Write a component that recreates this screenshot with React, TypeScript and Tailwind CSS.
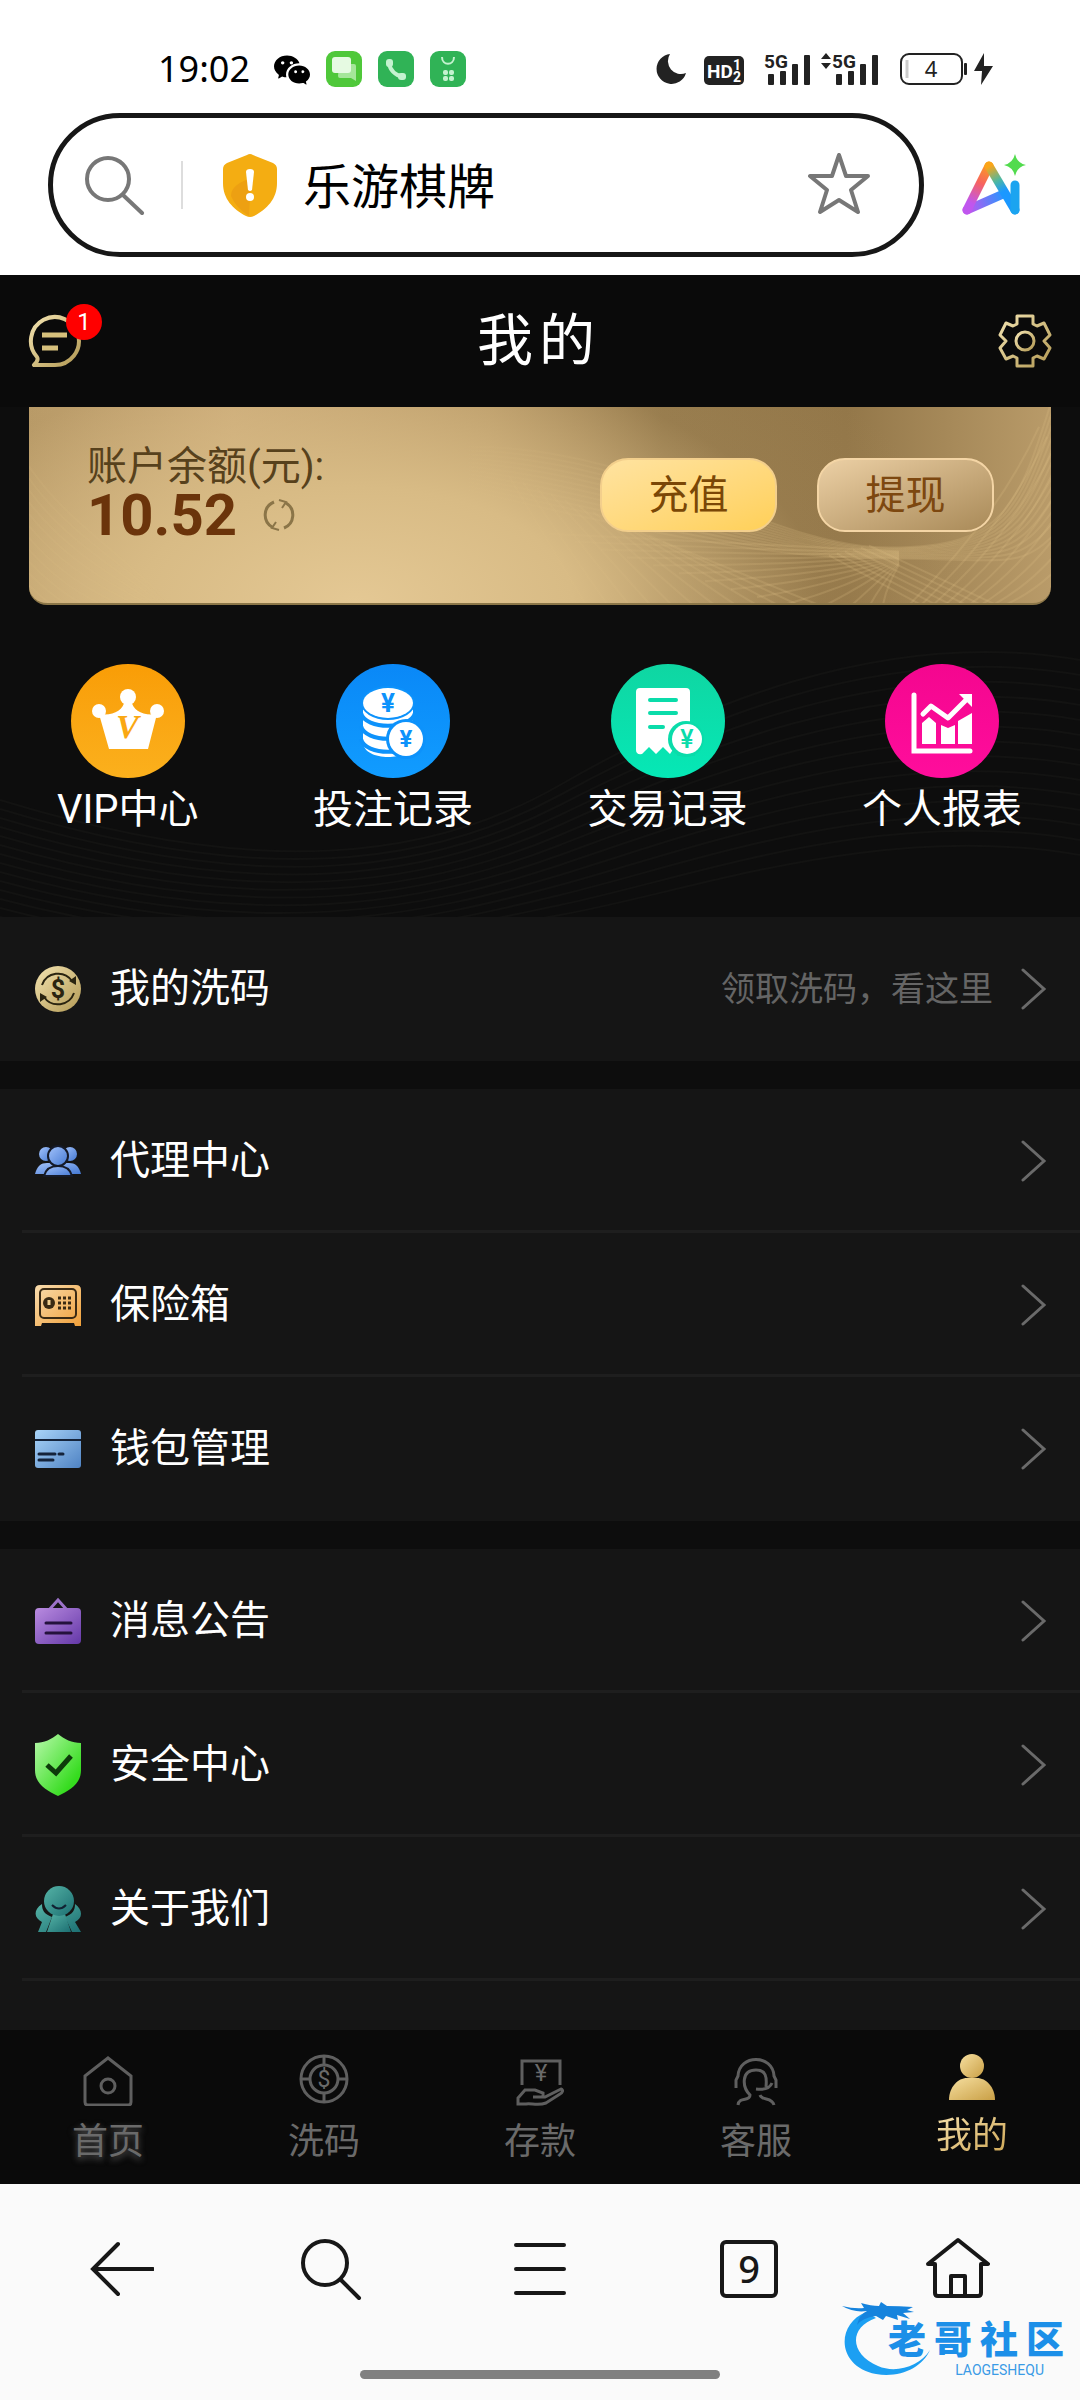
import type { ReactNode } from "react";
import { BsWechat } from "react-icons/bs";

const GOLD = "url(#gold)";

function Gradients() {
  return (
    <svg className="absolute size-0" aria-hidden="true">
      <defs>
        <linearGradient id="gold" x1="0" y1="0" x2="1" y2="1">
          <stop offset="0" stopColor="#f3e3b0" />
          <stop offset="1" stopColor="#b39a55" />
        </linearGradient>
        <linearGradient id="user" x1="0" y1="0" x2="1" y2="1">
          <stop offset="0" stopColor="#f6dfa0" />
          <stop offset="1" stopColor="#c99f45" />
        </linearGradient>
        <linearGradient id="blue" x1="0" y1="0" x2="1" y2="1">
          <stop offset="0" stopColor="#a3c3fb" />
          <stop offset="1" stopColor="#4579d3" />
        </linearGradient>
        <linearGradient id="sky" x1="0" y1="0" x2="1" y2="1">
          <stop offset="0" stopColor="#a9d4f8" />
          <stop offset="1" stopColor="#4f83c4" />
        </linearGradient>
        <linearGradient id="orange" x1="0" y1="0" x2="1" y2="1">
          <stop offset="0" stopColor="#f8dcae" />
          <stop offset="1" stopColor="#f0a03a" />
        </linearGradient>
        <linearGradient id="purple" x1="0" y1="0" x2="1" y2="1">
          <stop offset="0" stopColor="#b98be0" />
          <stop offset="1" stopColor="#6438a8" />
        </linearGradient>
        <linearGradient id="green" x1="0" y1="0" x2="1" y2="1">
          <stop offset="0.1" stopColor="#a8f59a" />
          <stop offset="0.8" stopColor="#35dc1e" />
        </linearGradient>
        <linearGradient id="teal" x1="0" y1="0" x2="1" y2="1">
          <stop offset="0" stopColor="#55b3a6" />
          <stop offset="1" stopColor="#1c6f72" />
        </linearGradient>
      </defs>
    </svg>
  );
}

function Signal({ arrows }: { arrows?: boolean }) {
  return (
    <div className="flex items-start">
      {arrows && (
        <svg className="w-3 h-8" viewBox="0 0 12 32" fill="#222">
          <path d="M6 0l5 6H1zM6 16l5-6H1z" />
        </svg>
      )}
      <svg className="w-12 h-8 overflow-visible" viewBox="0 0 48 32" fill="#222">
        <text x="0" y="15" fontSize="19" fontWeight="700" fontFamily="Roboto">5G</text>
        <rect x="4" y="21" width="6" height="11" rx="1" />
        <rect x="16" y="18" width="6" height="14" rx="1" />
        <rect x="28" y="11" width="6" height="21" rx="1" />
        <rect x="40" y="2" width="6" height="30" rx="1" />
      </svg>
    </div>
  );
}

function StatusBar() {
  return (
    <div className="flex items-center justify-between h-[113px] pl-[158px] pr-[86px] pt-6">
      <div className="flex items-center">
        <span className="text-[36px] leading-9 text-black">19:02</span>
        <BsWechat className="ml-6 size-9 text-black" />
        <div className="ml-4 flex gap-4">
          <svg className="size-9" viewBox="0 0 36 36">
            <rect width="36" height="36" rx="9" fill="#4fc83a" />
            <path d="M13 13h15a2 2 0 012 2v15l-5-3H14a2 2 0 01-2-2z" fill="#a5e69a" />
            <rect x="6" y="6" width="19" height="16" rx="3" fill="#e6fae2" />
          </svg>
          <svg className="size-9" viewBox="0 0 36 36">
            <rect width="36" height="36" rx="9" fill="#30b356" />
            <path d="M11 12c1 7 6 12 14 14" fill="none" stroke="#c4f2cf" strokeWidth="4" />
            <rect x="8" y="8" width="7" height="8" rx="3" fill="#c4f2cf" />
            <rect x="20" y="22" width="8" height="7" rx="3" fill="#c4f2cf" />
          </svg>
          <svg className="size-9" viewBox="0 0 36 36">
            <rect width="36" height="36" rx="9" fill="#30b356" />
            <path d="M12 6c0 9 12 9 12 0" fill="none" stroke="#c4f2cf" strokeWidth="2" />
            <g fill="#c4f2cf">
              <rect x="13" y="19" width="5" height="5" rx="2" />
              <rect x="19" y="19" width="5" height="5" rx="2" />
              <rect x="13" y="25" width="5" height="5" rx="2" />
              <rect x="19" y="25" width="5" height="5" rx="2" />
            </g>
          </svg>
        </div>
      </div>
      <div className="flex items-center">
        <svg className="size-8" viewBox="0 0 32 32" fill="#222">
          <path d="M14 1A15 15 0 1030 20 A13 13 0 0114 1z" />
        </svg>
        <svg className="ml-4 w-10 h-8" viewBox="0 0 40 32">
          <rect y="3" width="40" height="29" rx="5" fill="#222" />
          <g fill="#fff" fontFamily="Roboto" fontWeight="700">
            <text x="3" y="25" fontSize="19">HD</text>
            <text x="29" y="17" fontSize="14">1</text>
            <text x="29" y="29" fontSize="14">2</text>
          </g>
        </svg>
        <div className="ml-5 flex gap-2">
          <Signal />
          <Signal arrows />
        </div>
        <svg className="ml-5 w-[94px] h-8 overflow-visible" viewBox="0 0 94 32">
          <rect x="1" y="1" width="61" height="30" rx="8" fill="none" stroke="#222" strokeWidth="2" />
          <path d="M7 7v18" stroke="#ccc" strokeWidth="3" />
          <rect x="64" y="10" width="3" height="12" rx="1" fill="#222" />
          <text x="31" y="24" textAnchor="middle" fontSize="22" fontFamily="Noto Sans" fill="#222">4</text>
          <path d="M84 0L74 18h8l-1 14 12-19h-9z" fill="#222" />
        </svg>
      </div>
    </div>
  );
}

function AddressBar() {
  return (
    <div className="flex items-center pl-12 pr-13 pb-[18px]">
      <div className="flex flex-1 min-w-0 items-center h-36 rounded-full border-5 border-[#171717] pl-8 pr-12">
        <svg className="size-[60px] shrink-0" viewBox="0 0 60 60" fill="none" stroke="#777" strokeWidth="4" strokeLinecap="round">
          <circle cx="23" cy="24" r="21" />
          <path d="M38 40l19 18" />
        </svg>
        <span className="ml-9 w-0.5 h-12 bg-[#ddd]" />
        <svg className="ml-10 w-[54px] h-16 shrink-0" viewBox="0 0 54 64">
          <path d="M24 2q3-2 6 0l20 8q4 2 4 6v14c0 16-10 26-23 33q-4 2-8 0C10 56 0 46 0 30V16q0-4 4-6z" fill="#f4ad12" />
          <path d="M8 43c0-10 10-14 20-18l-2 38C18 58 12 52 8 43z" fill="#eda012" />
          <path d="M23 19q0-3 4-3t4 3l-2 18q-2 2-4 0z" fill="#fff" />
          <circle cx="27" cy="44" r="4" fill="#fff" />
        </svg>
        <input
          aria-label="地址"
          defaultValue="乐游棋牌"
          className="ml-[26px] pt-0.5 flex-1 min-w-0 text-[48px] leading-[72px] text-black outline-none"
        />
        <button type="button" aria-label="收藏" className="shrink-0">
          <svg className="size-16" viewBox="0 0 64 64" fill="none" stroke="#777" strokeWidth="4" strokeLinejoin="round">
            <path d="M32 2l7 21h22L44 37l7 22-19-12-19 12 7-22L3 23h22z" />
          </svg>
        </button>
      </div>
      <button type="button" aria-label="AI" className="ml-9 shrink-0">
        <svg className="w-[68px] h-16" viewBox="0 0 68 64" fill="none" strokeWidth="9" strokeLinecap="round" strokeLinejoin="round">
          <defs>
            <linearGradient id="ai1" gradientUnits="userSpaceOnUse" x1="30" y1="10" x2="6" y2="60">
              <stop offset="0" stopColor="#fba518" />
              <stop offset="0.4" stopColor="#f7635f" />
              <stop offset="0.8" stopColor="#c056ee" />
            </linearGradient>
            <linearGradient id="ai2" gradientUnits="userSpaceOnUse" x1="8" y1="58" x2="44" y2="46">
              <stop offset="0" stopColor="#c056ee" />
              <stop offset="1" stopColor="#2b95ff" />
            </linearGradient>
            <linearGradient id="ai3" gradientUnits="userSpaceOnUse" x1="28" y1="14" x2="48" y2="50">
              <stop offset="0" stopColor="#fba518" />
              <stop offset="0.4" stopColor="#4fb8a0" />
              <stop offset="0.7" stopColor="#1b98ff" />
            </linearGradient>
          </defs>
          <path d="M7 57l34-15" stroke="url(#ai2)" />
          <path d="M7 57L29 13" stroke="url(#ai1)" />
          <path d="M29 13l26 44" stroke="url(#ai3)" />
          <path d="M55 57V32" stroke="#1ba4f0" />
          <path d="M55 1q2 9 11 11-9 2-11 11-2-9-11-11 9-2 11-11z" fill="#52db4e" />
        </svg>
      </button>
    </div>
  );
}

function PageHeader() {
  return (
    <header className="flex items-center justify-between h-33 px-7 bg-[#0a0a0a]">
      <button type="button" aria-label="消息" className="relative">
        <svg className="size-[54px]" viewBox="0 0 54 54" fill="none" stroke={GOLD} strokeWidth="4">
          <path d="M6 51h21a24 24 0 10-18-8q2 3-3 8z" strokeLinejoin="round" />
          <path d="M14 21h25M14 34h16" strokeWidth="5" stroke="#d6c07c" />
        </svg>
        <span className="absolute -top-2.5 left-[38px] flex size-9 items-center justify-center rounded-full bg-[#f00] text-[24px] leading-none text-white">
          1
        </span>
      </button>
      <h1 className="flex gap-1.5 pr-2 text-[56px] leading-[84px] text-white">
        <span>我</span>
        <span>的</span>
      </h1>
      <button type="button" aria-label="设置">
        <svg className="size-[54px]" viewBox="0 0 54 54" fill="none" stroke={GOLD} strokeWidth="3" strokeLinejoin="round">
          <path d="M19 2h16v8l4 2 7-3 6 12-6 6 6 7-6 11-7-3-4 2v8H19v-8l-4-2-7 3-6-11 6-7-6-6 6-12 7 3 4-2z" />
          <circle cx="27" cy="27" r="9" />
        </svg>
      </button>
    </header>
  );
}

const lines = (count: number) => Array.from({ length: count }, (_, i) => i);

function CardWaves() {
  return (
    <svg className="absolute inset-0 size-full" viewBox="0 0 1022 198" preserveAspectRatio="none" fill="none" stroke="url(#wave)" strokeWidth="2">
      <defs>
        <linearGradient id="wave" gradientUnits="userSpaceOnUse" x1="360" y1="0" x2="760" y2="0">
          <stop offset="0" stopColor="#e0c186" stopOpacity="0" />
          <stop offset="1" stopColor="#e0c186" stopOpacity="0.2" />
        </linearGradient>
      </defs>
      {/* bundle that dips to a node near the right edge, then climbs */}
      {lines(12).map((i) => (
        <path key={`a${i}`} d={`M440 ${40 + i * 4}C620 ${40 + i * 8} 740 ${142 + i} 860 ${142 + i}S990 ${100 + i * 6} 1030 ${-30 + i * 14}`} />
      ))}
      {lines(12).map((i) => (
        <path key={`b${i}`} d={`M${480 + i * 14} ${70 + i * 6}L${560 + i * 22} 205`} />
      ))}
      {lines(14).map((i) => (
        <path key={`c${i}`} d={`M${520 + i * 26} ${128 + i * 8}Q${740 + i * 8} ${140 + i * 5} 870 ${146 + i}`} />
      ))}
      {lines(6).map((i) => (
        <path key={`d${i}`} d={`M${840 - i * 8} ${140 + i * 2}L${1010 - i * 18} ${220 - i}`} />
      ))}
      {lines(9).map((i) => (
        <path key={`e${i}`} d={`M${880 + i * 12} 200Q${970 + i * 8} ${110 + i * 8} ${1010 + i * 8} ${20 + i * 10}`} />
      ))}
      {lines(12).map((i) => (
        <path key={`f${i}`} stroke="#e3c48a" strokeOpacity="0.1" d={`M0 ${60 + i * 12}C40 ${120 + i * 10} 100 ${150 + i * 10} 160 220`} />
      ))}
    </svg>
  );
}

function BalanceCard() {
  return (
    <section className="relative mx-[29px] flex justify-between overflow-hidden rounded-b-[18px] border-b-2 border-[#8b7648] bg-[radial-gradient(ellipse_620px_330px_at_32%_100%,#e4c894_0%,#d8bb85_35%,#b4966320_75%,transparent_100%),linear-gradient(90deg,#b99b68_0%,#cfae7c_20%,#b99a68_45%,#957a4c_62%,#937749_80%,#b99b69_100%)] pt-9 pr-[57px] pb-16 pl-[58px]">
      <CardWaves />
      <div className="relative">
        <p className="text-[40px] leading-12 text-[#57411c]">账户余额(元):</p>
        <div className="flex items-center gap-[26px]">
          <strong className="font-[Roboto] text-[58px] leading-12 font-bold text-[#6b340b]">10.52</strong>
          <button type="button" aria-label="刷新">
            <svg className="size-8" viewBox="0 0 32 32" fill="none" stroke="#8b7548" strokeWidth="3">
              <path d="M11 3a14 14 0 00-2 25M21 29a14 14 0 002-25" />
              <path d="M16 1l7 2-4 6M16 31l-7-2 4-6" strokeWidth="2" />
            </svg>
          </button>
        </div>
      </div>
      <div className="relative flex items-start gap-10 pt-[15px]">
        <button
          type="button"
          className="w-[177px] h-[74px] rounded-[28px] border-2 border-[#f3cf8c] bg-linear-to-br from-[#ffe3a0] to-[#ffd057] pt-0.5 text-[40px] leading-12 text-[#7a4706]"
        >
          充值
        </button>
        <button
          type="button"
          className="w-[177px] h-[74px] rounded-[28px] border-2 border-[#f4d5a5] bg-linear-to-br from-[#ecd0a5] to-[#a98a58] pt-0.5 text-[40px] leading-12 text-[#7d4810]"
        >
          提现
        </button>
      </div>
    </section>
  );
}

const shortcuts: { label: string; color: string; icon: ReactNode }[] = [
  {
    label: "VIP中心",
    color: "bg-linear-to-b from-[#f99d06] to-[#fbb01c]",
    icon: (
      <>
        <circle cx="57" cy="33" r="8" />
        <circle cx="28" cy="47" r="7" />
        <circle cx="86" cy="47" r="7" />
        <path d="M28 50c14 2 24-3 26-14h6c2 11 12 16 26 14l-9 35H38z" />
        <text x="45" y="74" fontSize="34" fontWeight="700" fontStyle="italic" fontFamily="Liberation Serif" fill="#faa812">V</text>
      </>
    ),
  },
  {
    label: "投注记录",
    color: "bg-linear-to-b from-[#0a88f7] to-[#119cff]",
    icon: (
      <>
        <path d="M27 78c0 20 50 20 50 0V40H27z" />
        <path d="M25 49c4 17 50 17 54 0M25 62c4 17 50 17 54 0M25 75c4 17 50 17 54 0" fill="none" stroke="#0d92fb" strokeWidth="4" />
        <ellipse cx="52" cy="39" rx="27" ry="17" fill="#0d92fb" />
        <ellipse cx="52" cy="39" rx="25" ry="15" />
        <text x="52" y="48" fontSize="26" fontWeight="700" textAnchor="middle" fontFamily="Roboto" fill="#0d92fb">¥</text>
        <circle cx="70" cy="75" r="20" fill="#0d92fb" />
        <circle cx="70" cy="75" r="17" />
        <text x="70" y="83" fontSize="24" fontWeight="700" textAnchor="middle" fontFamily="Roboto" fill="#0d92fb">¥</text>
      </>
    ),
  },
  {
    label: "交易记录",
    color: "bg-linear-to-b from-[#0fd6a2] to-[#05e8b6]",
    icon: (
      <>
        <path d="M25 28q0-4 4-4h46q4 0 4 4v60l-9-2-5-5-6 9-7-7-7 7-7-7-7 7q-6 1-6-4z" />
        <path d="M39 36h26M39 49h26M39 63h13" stroke="#0adcaa" strokeWidth="4" strokeLinecap="round" />
        <path d="M79 57v4H66v31h18z" fill="#0adcaa" />
        <circle cx="75" cy="75" r="18" fill="#0adcaa" />
        <circle cx="76" cy="75" r="15" />
        <text x="76" y="84" fontSize="25" textAnchor="middle" fontFamily="Roboto" fontWeight="500" fill="#0adcaa">¥</text>
      </>
    ),
  },
  {
    label: "个人报表",
    color: "bg-linear-to-b from-[#f4068f] to-[#ff0d9c]",
    icon: (
      <>
        <path d="M29 31v56h56" fill="none" stroke="#fff" strokeWidth="5" strokeLinecap="round" />
        <path d="M38 50l8-8 17 12 20-20" fill="none" stroke="#fff" strokeWidth="5" strokeLinecap="round" strokeLinejoin="round" />
        <path d="M74 30h13v13z" />
        <path d="M37 59l7-6 7 6v21H37zM56 61l7 3 7-3v19H56zM73 57l14-8v31H73z" />
      </>
    ),
  },
];

function Shortcuts() {
  return (
    <section className="relative pt-[59px] pb-[83px]">
      <svg className="absolute inset-0 size-full" viewBox="0 0 1080 312" preserveAspectRatio="none" fill="none" stroke="#131312" strokeWidth="2">
        {lines(14).map((i) => (
          <path key={i} d={`M0 ${195 + i * 9}C260 ${275 + i * 8} 430 ${255 + i * 6} 560 ${180 + i * 10}S880 ${20 + i * 15} 1080 ${55 + i * 15}`} />
        ))}
      </svg>
      <nav className="relative flex justify-between pl-[57px] pr-[58px]">
        {shortcuts.map((item) => (
          <a key={item.label} href="#" className="flex flex-col items-center gap-2">
            <span className={`size-[114px] rounded-full ${item.color}`}>
              <svg viewBox="0 0 114 114" fill="#fff">{item.icon}</svg>
            </span>
            <span className="text-[40px] leading-12 text-white">{item.label}</span>
          </a>
        ))}
      </nav>
    </section>
  );
}

type MenuItem = { label: string; hint?: string; icon: ReactNode };

const groups: MenuItem[][] = [
  [
    {
      label: "我的洗码",
      hint: "领取洗码，看这里",
      icon: (
        <>
          <circle cx="23" cy="23" r="23" fill={GOLD} />
          <path d="M7 19a17 17 0 0130-4M39 27a17 17 0 01-30 4" fill="none" stroke="#2a2410" strokeWidth="2" />
          <path d="M41 10v9l-7-4zM5 36v-9l7 4z" fill="#2a2410" />
          <text x="23" y="32" textAnchor="middle" fontSize="25" fontWeight="700" fontFamily="Roboto" fill="#2a2410">$</text>
        </>
      ),
    },
  ],
  [
    {
      label: "代理中心",
      icon: (
        <g fill="url(#blue)">
          <circle cx="11" cy="16" r="7" />
          <circle cx="35" cy="16" r="7" />
          <path d="M0 36c2-8 6-11 12-11h22c6 0 10 3 12 11z" />
          <g stroke="#151a28" strokeWidth="2">
            <circle cx="23" cy="18" r="10" />
            <path d="M9 38c2-8 8-10 14-10s12 2 14 10z" />
          </g>
        </g>
      ),
    },
    {
      label: "保险箱",
      icon: (
        <>
          <path d="M5 3h36q5 0 5 5v36H40l-1-3H7l-1 3H0V8q0-5 5-5z" fill="url(#orange)" />
          <rect x="5" y="7" width="36" height="29" rx="4" fill="none" stroke="#3a2a14" strokeWidth="2" />
          <circle cx="14" cy="21" r="6" fill="#3a2a14" />
          <path d="M14 18v5" stroke="#f0cf90" strokeWidth="3" />
          <path d="M23 16h15M23 21h15M23 26h15" stroke="#3a2a14" strokeWidth="3" strokeDasharray="3 2" />
        </>
      ),
    },
    {
      label: "钱包管理",
      icon: (
        <>
          <rect y="4" width="46" height="38" rx="3" fill="url(#sky)" />
          <path d="M0 14h46" stroke="#14233a" strokeWidth="2" />
          <path d="M4 28h16M24 28h4M4 34h14" stroke="#14233a" strokeWidth="3" strokeLinecap="round" />
        </>
      ),
    },
  ],
  [
    {
      label: "消息公告",
      icon: (
        <>
          <path d="M14 12l9-10 9 10" fill="none" stroke="#9c72c8" strokeWidth="3" />
          <rect y="10" width="46" height="36" rx="4" fill="url(#purple)" />
          <path d="M11 25h25M11 35h25" stroke="#24123d" strokeWidth="3" strokeLinecap="round" />
        </>
      ),
    },
    {
      label: "安全中心",
      icon: (
        <>
          <path d="M23-8C17-3 9 1 0 1v27c0 14 11 20 23 26 12-6 23-12 23-26V1C37 1 29-3 23-8z" fill="url(#green)" />
          <path d="M12 23l9 8 15-17" fill="none" stroke="#0d3a0a" strokeWidth="5" />
        </>
      ),
    },
    {
      label: "关于我们",
      icon: (
        <g fill="url(#teal)">
          <path d="M7 18C-2 24-1 32 7 36L3 46h8l6-15C9 28 7 24 7 18zM40 18c8 6 8 14 0 18l6 10h-9l-7-15c8-3 10-7 10-13z" />
          <path d="M18 28h12l6 18H12z" />
          <circle cx="24" cy="15" r="15" />
          <path d="M17 19q7 7 14 0" fill="none" stroke="#123" strokeWidth="2" />
        </g>
      ),
    },
  ],
];

function MenuRow({ item, divider }: { item: MenuItem; divider: boolean }) {
  return (
    <li className="relative">
      <a href="#" className="flex items-center h-36 pl-[35px] pr-[33px]">
        <svg className="size-[46px] overflow-visible" viewBox="0 0 46 46">{item.icon}</svg>
        <span className="ml-[29px] text-[40px] leading-[60px] text-white">{item.label}</span>
        <span className="ml-auto text-[34px] leading-[60px] text-[#656565]">{item.hint}</span>
        <svg className="ml-7 w-[26px] h-11" viewBox="0 0 26 44" fill="none" stroke="#6a6a6a" strokeWidth="3" strokeLinecap="round">
          <path d="M2 3l21 19L2 41" />
        </svg>
      </a>
      {divider && <span className="absolute bottom-0 left-[22px] right-0 h-[3px] bg-[#1e1e1e]" />}
    </li>
  );
}

const tabs: { label: string; icon: ReactNode }[] = [
  {
    label: "首页",
    icon: (
      <>
        <path d="M3 22L26 4l23 18v26q0 3-3 3H6q-3 0-3-3z" />
        <circle cx="26" cy="32" r="7" />
      </>
    ),
  },
  {
    label: "洗码",
    icon: (
      <>
        <circle cx="26" cy="25" r="23" />
        <circle cx="26" cy="25" r="14" />
        <path d="M26 1v9M26 40v9M2 25h9M41 25h9" />
        <text x="26" y="33" textAnchor="middle" fontSize="23" fontFamily="Roboto" fill="#6a6a6a" stroke="none">$</text>
      </>
    ),
  },
  {
    label: "存款",
    icon: (
      <>
        <path d="M8 31V7h38v24" />
        <text x="27" y="27" textAnchor="middle" fontSize="24" fontFamily="Roboto" fill="#6a6a6a" stroke="none">¥</text>
        <path d="M4 50V44l7-8h10l8 3v4H19h12l16-8c3 1 1 4-1 5L32 49c-8 3-15 0-20 1z" />
      </>
    ),
  },
  {
    label: "客服",
    icon: (
      <>
        <path d="M6 34v-8l2-4C9 0 43 0 44 22l2 4v8" />
        <path d="M8 51c1-9 12-3 12-10-8-8-9-25 6-25 10 0 11 7 10 17M26 35c8 1 14-1 16-6M30 41c2 6 12 2 14 10" />
      </>
    ),
  },
];

function TabBar() {
  return (
    <nav className="grid grid-cols-5 h-[154px] bg-[#0a0a0a]">
      {tabs.map((tab, i) => (
        <a key={tab.label} href="#" className="flex flex-col items-center gap-3 pt-6">
          <svg className="size-[52px]" viewBox="0 0 52 52" fill="none" stroke="#5f5f5f" strokeWidth="3">{tab.icon}</svg>
          <span className={`text-[36px] leading-12 text-[#6a6a6a] ${i === 0 ? "text-shadow-[0_3px_6px_#555555]" : ""}`}>
            {tab.label}
          </span>
        </a>
      ))}
      <a href="#" aria-current="page" className="flex flex-col items-center gap-3 pt-6">
        <svg className="size-[46px]" viewBox="0 0 46 46" fill="url(#user)">
          <circle cx="23" cy="12" r="12" />
          <path d="M0 46c0-13 9-22 18-22h10c9 0 18 9 18 22z" />
        </svg>
        <span className="bg-linear-to-br from-[#f6e2ae] to-[#cba24c] bg-clip-text text-[36px] leading-12 text-transparent">我的</span>
      </a>
    </nav>
  );
}

const browserButtons: { label: string; icon: ReactNode }[] = [
  { label: "返回", icon: <path d="M28 7L3 32l25 25M3 32h60" /> },
  {
    label: "搜索",
    icon: (
      <>
        <circle cx="26" cy="26" r="22" />
        <path d="M42 43l18 18" />
      </>
    ),
  },
  { label: "菜单", icon: <path d="M8 8h48M8 32h48M8 56h48" /> },
  {
    label: "标签页",
    icon: (
      <>
        <rect x="5" y="5" width="54" height="54" rx="4" />
        <text x="32" y="46" textAnchor="middle" fontSize="38" fontWeight="500" fontFamily="Noto Sans" fill="#171717" stroke="none">9</text>
      </>
    ),
  },
  {
    label: "主页",
    icon: <path d="M32 3l30 24H55v29q0 3-3 3H12q-3 0-3-3V27H2zM25 59V39h14v20" strokeLinejoin="round" />,
  },
];

function BrowserBar() {
  return (
    <footer className="relative flex flex-col items-center h-[216px] bg-[#fafafa]">
      <div className="grid w-full grid-cols-5 px-[18px] pt-[53px]">
        {browserButtons.map((button) => (
          <button key={button.label} type="button" aria-label={button.label} className="flex justify-center">
            <svg className="size-16" viewBox="0 0 64 64" fill="none" stroke="#171717" strokeWidth="4" strokeLinecap="round">{button.icon}</svg>
          </button>
        ))}
      </div>
      <span className="mt-[69px] w-1/3 h-[9px] rounded-full bg-[#808080]" />
      <div className="absolute right-4 bottom-6 w-[222px] h-19">
        <svg className="absolute inset-0" viewBox="0 0 222 76" fill="#1c9ff2">
          <path d="M24 12C-6 24-6 66 34 74c24 4 46-6 54-24-10 16-34 24-52 16C8 54 6 28 34 18z" />
          <path d="M0 6q12 3 22 2l-3-5q10 3 18 3l2-4 6 4q12 0 26 1l-6 3 7 2-11 1 7 6-13-4 1 5-12-4-3 4-7-4q-14 2-19 9 2-10 10-14Q12 13 0 6z" fill="#1583dd" />
        </svg>
        <span className="absolute right-0 top-5.5 flex gap-2 text-[38px] leading-9 font-black text-[#1c8fe8]">
          <span>老</span>
          <span>哥</span>
          <span>社</span>
          <span>区</span>
        </span>
        <span className="absolute right-5 top-[62px] text-[14px] leading-4 text-[#3a9be6]">LAOGESHEQU</span>
      </div>
    </footer>
  );
}

export default function App() {
  return (
    <div className="flex flex-col min-h-screen bg-white font-[Roboto,'Noto_Sans_CJK_SC',sans-serif]">
      <Gradients />
      <div className="font-['Noto_Sans','Noto_Sans_CJK_SC',sans-serif]">
        <StatusBar />
        <AddressBar />
      </div>
      <PageHeader />
      <main className="flex flex-1 flex-col bg-[#0d0d0d]">
        <BalanceCard />
        <Shortcuts />
        <div className="flex flex-1 flex-col gap-7">
          {groups.map((group, g) => (
            <ul key={g} className="bg-[#151515] last:flex-1">
              {group.map((item, i) => (
                <MenuRow key={item.label} item={item} divider={g === 2 || i < group.length - 1} />
              ))}
            </ul>
          ))}
        </div>
      </main>
      <TabBar />
      <BrowserBar />
    </div>
  );
}
